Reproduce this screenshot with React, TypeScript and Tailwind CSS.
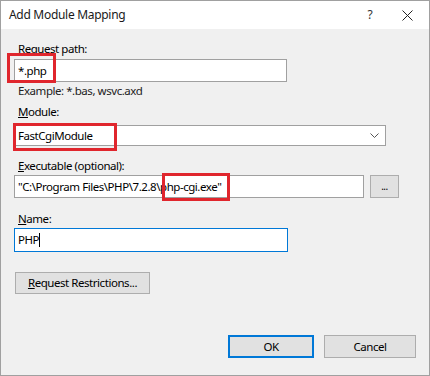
export default function App() {
    const font = { fontFamily: '"Noto Sans", "Open Sans", sans-serif' };
    return (
        <div className="w-[430px] h-[376px] bg-white" style={font}>
            <div className="relative w-[430px] h-[376px] border border-[#a0a0a0] bg-[#f0f0f0] flex flex-col text-[11.5px] tracking-[-0.45px] text-[#000]">
                {/* title bar */}
                <div className="h-[28px] bg-white flex items-center pl-[8px] text-[12px] tracking-[-0.3px] text-[#1a1a1a]">
                    <span className="flex-1">Add Module Mapping</span>
                    <span className="w-[30px] text-center text-[12px] text-[#333]">?</span>
                    <span className="w-[44px] flex justify-center">
                        <svg width="11" height="11" viewBox="0 0 11 11">
                            <path d="M0.5 0.5 L10.5 10.5 M10.5 0.5 L0.5 10.5" stroke="#222" strokeWidth="1" />
                        </svg>
                    </span>
                </div>
                <div className="flex flex-col pl-[13px] pt-[12px] leading-[16px]">
                    <div className="pl-[4px]"><u>R</u>equest path:</div>
                    <div className="mt-[2px] w-[273px] h-[23px] bg-white border border-[#a0a0a0] flex items-center pl-[3px]">*.php</div>
                    <div className="mt-[1px] pl-[4px] text-[#222]">Example: *.bas, wsvc.axd</div>
                    <div className="mt-[5px] pl-[4px]"><u>M</u>odule:</div>
                    <div className="mt-[5px] w-[372px] h-[21px] bg-white border border-[#a0a0a0] flex items-center pl-[3px] pr-[6px]">
                        <span className="flex-1">FastCgiModule</span>
                        <svg width="9" height="6" viewBox="0 0 9 6">
                            <path d="M0.5 0.5 L4.5 4.5 L8.5 0.5" fill="none" stroke="#555" strokeWidth="1" />
                        </svg>
                    </div>
                    <div className="mt-[12px] pl-[4px]"><u>E</u>xecutable (optional):</div>
                    <div className="mt-[1px] flex items-center gap-[6px]">
                        <div className="w-[350px] h-[23px] bg-white border border-[#a0a0a0] flex items-center pl-[3px] whitespace-nowrap overflow-hidden">"C:\Program Files\PHP\7.2.8\php-cgi.exe"</div>
                        <div className="w-[29px] h-[23px] bg-[#e1e1e1] border border-[#adadad] flex items-center justify-center text-[10px] leading-none pb-[2px]">...</div>
                    </div>
                    <div className="mt-[13px] pl-[4px]"><u>N</u>ame:</div>
                    <div className="mt-[1px] w-[274px] h-[24px] bg-white border border-[#0078d7] flex items-center pl-[3px]">PHP<span className="w-px h-[14px] bg-black"></span></div>
                    <div className="mt-[20px] ml-[1px] w-[135px] h-[22px] bg-[#e1e1e1] border border-[#adadad] flex items-center justify-center"><span><u>R</u>equest Restrictions...</span></div>
                    <div className="mt-[41px] flex gap-[10px] pl-[214px]">
                        <div className="w-[86px] h-[23px] bg-[#e1e1e1] border-2 border-[#0078d7] flex items-center justify-center">OK</div>
                        <div className="w-[92px] h-[23px] bg-[#e1e1e1] border border-[#adadad] flex items-center justify-center">Cancel</div>
                    </div>
                </div>
                {/* annotation boxes */}
                <div className="absolute left-[6px] top-[52px] w-[49px] h-[30px] border-[3px] border-[#e0262d]"></div>
                <div className="absolute left-[12px] top-[122px] w-[104px] h-[28px] border-[3px] border-[#e0262d]"></div>
                <div className="absolute left-[161px] top-[172px] w-[68px] h-[28px] border-[3px] border-[#e0262d]"></div>
            </div>
        </div>
    );
}
